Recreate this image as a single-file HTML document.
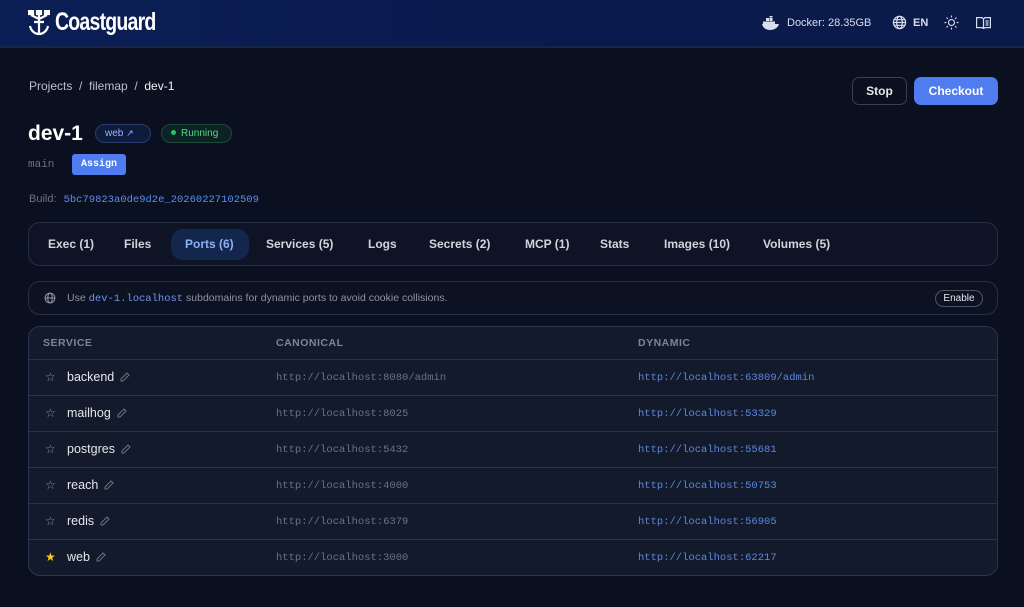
<!DOCTYPE html><html><head><style>
*{box-sizing:border-box;margin:0;padding:0}
body{width:1024px;height:607px;overflow:hidden;background:#0b1020;font-family:"Liberation Sans",sans-serif;color:#e5e7eb;position:relative}
.hdr{position:absolute;left:0;top:0;width:1024px;height:48px;background:linear-gradient(90deg,#0b1f55,#0a1a4c 60%,#0a1a4a);border-bottom:2px solid #18244a}
.abs{position:absolute}
.mono{font-family:"Liberation Mono",monospace}
.tabs{left:28px;top:222px;width:970px;height:44px;border:1px solid #263049;border-radius:12px;background:#0e1426}
.tab{position:absolute;top:11px;height:30px;font-size:12px;font-weight:bold;color:#d1d5db;line-height:20px}
.info{left:28px;top:281px;width:970px;height:34px;border:1px solid #263049;border-radius:12px;background:#0c1222}
.tbl{left:28px;top:326px;width:970px;height:250px;border:1px solid #2a3550;border-radius:12px;background:#131a2b;overflow:hidden}
.row{position:absolute;left:0;width:970px;height:36px;border-top:1px solid #283249}
.row span{position:absolute;top:12px;font-size:10.5px}
.nm{left:38px;font-size:12.5px!important;color:#e5e7eb;top:10px!important;white-space:nowrap}
.nm svg{vertical-align:-1px;margin-left:6px}
.cn{left:247px;color:#6b7280;font-family:"Liberation Mono",monospace}
.dy{left:609px;color:#5b86e0;font-family:"Liberation Mono",monospace}
.st{left:16px;color:#8b93a5;font-size:12px!important;top:10px!important}
</style></head><body>
<div class="hdr"></div>
<svg class="abs" style="left:28px;top:10px" width="22" height="26" viewBox="0 0 22 26" fill="none" stroke="#fff" stroke-width="2.2"><rect x="1" y="1" width="4" height="3" fill="#fff"/><rect x="9" y="0" width="4" height="4" fill="#fff"/><rect x="17" y="1" width="4" height="3" fill="#fff"/><path d="M3 5l8 4 8-4M11 4v20M6 12h10M2 16c1 5 5 8 9 8s8-3 9-8"/></svg>
<div class="abs" style="left:55px;top:8px;font-size:25px;font-weight:bold;color:#fff;letter-spacing:-1px;transform:scaleX(.78);transform-origin:left">Coastguard</div>
<svg class="abs" style="left:762px;top:16px" width="18" height="14" viewBox="0 0 18 14" fill="#d8deea"><rect x="4" y="2" width="3" height="3"/><rect x="7.5" y="2" width="3" height="3"/><rect x="7.5" y="0" width="3" height="1.5"/><rect x="1" y="5.5" width="12" height="3"/><path d="M0 8h17c-1 4-5 6-9 6S1 12 0 8z"/></svg>
<div class="abs" style="left:787px;top:17px;font-size:11px;color:#d8deea">Docker: 28.35GB</div>
<svg class="abs" style="left:892px;top:15px" width="15" height="15" viewBox="0 0 16 16" fill="none" stroke="#d8deea" stroke-width="1.3"><circle cx="8" cy="8" r="6.5"/><ellipse cx="8" cy="8" rx="3" ry="6.5"/><path d="M1.5 8h13M2.5 5h11M2.5 11h11"/></svg>
<div class="abs" style="left:913px;top:17px;font-size:11px;color:#d8deea;font-weight:bold">EN</div>
<svg class="abs" style="left:944px;top:15px" width="15" height="15" viewBox="0 0 16 16" fill="none" stroke="#d8deea" stroke-width="1.2"><circle cx="8" cy="8" r="3.2"/><path d="M8 0.5v2M8 13.5v2M0.5 8h2M13.5 8h2M2.7 2.7l1.4 1.4M11.9 11.9l1.4 1.4M2.7 13.3l1.4-1.4M11.9 4.1l1.4-1.4"/></svg>
<svg class="abs" style="left:976px;top:17px" width="15" height="12" viewBox="0 0 15 12" fill="none" stroke="#d8deea" stroke-width="1.2"><path d="M.6.6h5.5l1.4 1.4 1.4-1.4h5.5v10h-5.5l-1.4 1-1.4-1H.6z"/><path d="M7.5 2v9M9.5 4h3M9.5 6h3M9.5 8h3"/></svg>
<div class="abs" style="left:29px;top:79px;font-size:12px;color:#b8bfcc">Projects &nbsp;/&nbsp; filemap &nbsp;/&nbsp; <span style="color:#f3f4f6">dev-1</span></div>
<div class="abs" style="left:852px;top:77px;width:55px;height:28px;border:1px solid #374151;border-radius:7px;font-size:12px;font-weight:bold;color:#e5e7eb;text-align:center;line-height:26px">Stop</div>
<div class="abs" style="left:914px;top:77px;width:84px;height:28px;background:#4f7df0;border-radius:7px;font-size:12px;font-weight:bold;color:#fff;text-align:center;line-height:28px">Checkout</div>
<div class="abs" style="left:28px;top:122px;font-size:21px;font-weight:bold;color:#fff">dev-1</div>
<div class="abs" style="left:95px;top:124px;width:56px;height:19px;border:1px solid #2a3d70;background:#0f1b3a;border-radius:10px;font-size:10px;color:#93b4ff;line-height:17px;padding-left:9px">web <span style="font-size:9px">↗</span></div>
<div class="abs" style="left:161px;top:124px;width:71px;height:19px;border:1px solid #1d4a3a;background:#0c2224;border-radius:10px;font-size:10px;color:#4ade80;line-height:17px;padding-left:9px"><span style="display:inline-block;width:5px;height:5px;border-radius:50%;background:#22c55e;margin-right:5px;vertical-align:1px"></span>Running</div>
<div class="abs mono" style="left:28px;top:159px;font-size:11px;color:#6b7280">main</div>
<div class="abs mono" style="left:72px;top:154px;width:54px;height:21px;background:#4f7df0;border-radius:3px;font-size:10px;color:#fff;text-align:center;line-height:21px;font-weight:bold">Assign</div>
<div class="abs" style="left:29px;top:193px;font-size:11px;color:#6b7280">Build: <span class="mono" style="color:#5b8def;font-size:10.5px;margin-left:4px">5bc79823a0de9d2e_20260227102509</span></div>
<div class="abs tabs">
<div class="tab" style="left:19px">Exec (1)</div>
<div class="tab" style="left:95px">Files</div>
<div class="abs" style="left:142px;top:6px;width:78px;height:31px;background:#13264c;border-radius:12px"></div>
<div class="tab" style="left:156px;color:#8fb0f6">Ports (6)</div>
<div class="tab" style="left:237px">Services (5)</div>
<div class="tab" style="left:339px">Logs</div>
<div class="tab" style="left:400px">Secrets (2)</div>
<div class="tab" style="left:496px">MCP (1)</div>
<div class="tab" style="left:571px">Stats</div>
<div class="tab" style="left:635px">Images (10)</div>
<div class="tab" style="left:734px">Volumes (5)</div>
</div>
<div class="abs info">
<svg class="abs" style="left:15px;top:10px" width="12" height="12" viewBox="0 0 16 16" fill="none" stroke="#8b93a5" stroke-width="1.4"><circle cx="8" cy="8" r="6.5"/><ellipse cx="8" cy="8" rx="3" ry="6.5"/><path d="M1.5 8h13"/></svg>
<div class="abs" style="left:38px;top:10px;font-size:10.5px;color:#8b93a5">Use <span class="mono" style="color:#6f95f0">dev-1.localhost</span> subdomains for dynamic ports to avoid cookie collisions.</div>
<div class="abs" style="left:906px;top:8px;width:48px;height:17px;border:1px solid #4b5563;border-radius:9px;font-size:10px;color:#e5e7eb;text-align:center;line-height:15px">Enable</div>
</div>
<div class="abs tbl">
<div class="abs" style="left:14px;top:10px;font-size:10.5px;font-weight:bold;color:#7c8496;letter-spacing:.5px">SERVICE</div>
<div class="abs" style="left:247px;top:10px;font-size:10.5px;font-weight:bold;color:#7c8496;letter-spacing:.5px">CANONICAL</div>
<div class="abs" style="left:609px;top:10px;font-size:10.5px;font-weight:bold;color:#7c8496;letter-spacing:.5px">DYNAMIC</div>
<div class="row" style="top:32px"><span class="st">☆</span><span class="nm">backend<svg width="10" height="10" viewBox="0 0 10 10" fill="none" stroke="#6b7280" stroke-width="1"><path d="M7 1l2 2-6 6H1V7z"/></svg></span><span class="cn">http://localhost:8080/admin</span><span class="dy">http://localhost:63809/admin</span></div>
<div class="row" style="top:68px"><span class="st">☆</span><span class="nm">mailhog<svg width="10" height="10" viewBox="0 0 10 10" fill="none" stroke="#6b7280" stroke-width="1"><path d="M7 1l2 2-6 6H1V7z"/></svg></span><span class="cn">http://localhost:8025</span><span class="dy">http://localhost:53329</span></div>
<div class="row" style="top:104px"><span class="st">☆</span><span class="nm">postgres<svg width="10" height="10" viewBox="0 0 10 10" fill="none" stroke="#6b7280" stroke-width="1"><path d="M7 1l2 2-6 6H1V7z"/></svg></span><span class="cn">http://localhost:5432</span><span class="dy">http://localhost:55681</span></div>
<div class="row" style="top:140px"><span class="st">☆</span><span class="nm">reach<svg width="10" height="10" viewBox="0 0 10 10" fill="none" stroke="#6b7280" stroke-width="1"><path d="M7 1l2 2-6 6H1V7z"/></svg></span><span class="cn">http://localhost:4000</span><span class="dy">http://localhost:50753</span></div>
<div class="row" style="top:176px"><span class="st">☆</span><span class="nm">redis<svg width="10" height="10" viewBox="0 0 10 10" fill="none" stroke="#6b7280" stroke-width="1"><path d="M7 1l2 2-6 6H1V7z"/></svg></span><span class="cn">http://localhost:6379</span><span class="dy">http://localhost:56905</span></div>
<div class="row" style="top:212px"><span class="st" style="color:#facc15">★</span><span class="nm">web<svg width="10" height="10" viewBox="0 0 10 10" fill="none" stroke="#6b7280" stroke-width="1"><path d="M7 1l2 2-6 6H1V7z"/></svg></span><span class="cn">http://localhost:3000</span><span class="dy">http://localhost:62217</span></div>
</div>
</body></html>
